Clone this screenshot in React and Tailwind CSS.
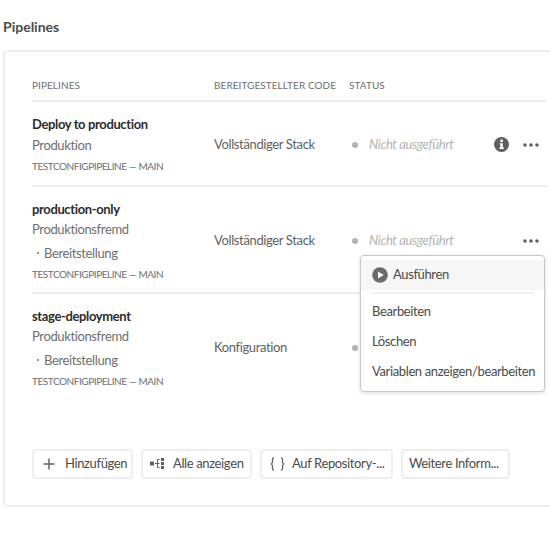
function Dots() {
  return (
    <svg width="16" height="4" viewBox="0 0 16 4" className="block">
      <circle cx="2" cy="2" r="1.8" fill="#5f5f5f" />
      <circle cx="8" cy="2" r="1.8" fill="#5f5f5f" />
      <circle cx="14" cy="2" r="1.8" fill="#5f5f5f" />
    </svg>
  );
}
function Status() {
  return (
    <div className="flex items-center ml-[3px]">
      <span className="w-[6px] h-[6px] rounded-full bg-[#b3b3b3]" />
      <span className="ml-[11px] text-[13px] italic text-[#b3b3b3]">Nicht ausgeführt</span>
    </div>
  );
}
function Row({ name, env, deploy, code, status, info, dots, border, h, tail, shift }) {
  return (
    <div className={`grid grid-cols-[182px_135px_1fr] items-center ${h} ${border ? "border-b-2 border-[#ededed]" : ""}`}>
      <div className="flex flex-col">
        <div className="text-[13px] leading-[20px] font-bold text-[#2c2c2c]">{name}</div>
        <div className={`text-[13px] leading-[20px] text-[#6e6e6e] ${deploy ? "" : "mt-[1px]"}`}>{env}</div>
        {deploy && (
          <div className="text-[13px] leading-[20px] mt-[4px] text-[#6e6e6e] pl-[5px] flex items-center">
            <span className="w-[2px] h-[2px] rounded-full bg-[#6e6e6e] mr-[5px]" />Bereitstellung
          </div>
        )}
        <div className="text-[10px] leading-[14px] mt-[4px] tracking-[-0.44px] text-[#6e6e6e]">TESTCONFIGPIPELINE — MAIN</div>
      </div>
      <div className={`text-[13px] text-[#5f5f5f] ${shift}`}>{code}</div>
      <div className={`flex items-center ${shift}`}>
        {status && <Status />}
        {tail && <span className="ml-[3px] w-[6px] h-[6px] rounded-full bg-[#b3b3b3]" />}
        <div className="ml-auto mr-[7px] flex items-center gap-[14px]">
          {info && (
            <svg width="15" height="15" viewBox="0 0 15 15">
              <circle cx="7.5" cy="7.5" r="7.5" fill="#5f5f5f" />
              <rect x="6.3" y="2.6" width="2.6" height="2.4" rx="0.6" fill="#fff" />
              <path d="M5.6 6.2h3.2v4.4h1v1.4H5.4v-1.4h1v-3h-.8z" fill="#fff" />
            </svg>
          )}
          {dots && <Dots />}
        </div>
      </div>
    </div>
  );
}
function Btn({ icon, children, w }) {
  return (
    <div className={`h-[30px] ${w} flex items-center whitespace-nowrap border-2 border-[#eeeeee] rounded-[4px] text-[13px] text-[#4b4b4b] bg-white`}>
      {icon}
      {children}
    </div>
  );
}
export default function App() {
  return (
    <div className="w-[550px] h-[547px] overflow-hidden bg-white relative tracking-[-0.37px]" style={{ fontFamily: '"Lato", "Noto Sans", sans-serif' }}>
      <h1 className="pl-[3px] pt-[17px] text-[14px] leading-[20px] font-bold tracking-normal text-[#4b4b4b]">Pipelines</h1>
      <div className="mt-[13px] ml-[3px] w-[560px] h-[457px] border-2 border-[#eeeeee] rounded-[4px] pl-[27px] pt-[26px] relative">
        <div className="w-[514px]">
          <div className="grid grid-cols-[182px_135px_1fr] h-[24px] border-b-2 border-[#ededed] text-[10px] tracking-[0.07px] leading-[14px] text-[#6e6e6e]">
            <div>PIPELINES</div>
            <div>BEREITGESTELLTER CODE</div>
            <div>STATUS</div>
          </div>
          <Row h="h-[85px]" shift="mt-[2px]" border name="Deploy to production" env="Produktion" code="Vollständiger Stack" status info dots />
          <Row h="h-[107px]" shift="mt-[2px]" border name="production-only" env="Produktionsfremd" deploy code="Vollständiger Stack" status dots />
          <Row h="h-[105px]" shift="mt-[2px]" name="stage-deployment" env="Produktionsfremd" deploy code="Konfiguration" tail />
        </div>
        <div className="mt-[50px] flex gap-[8px]">
          <Btn w="w-[101px]" icon={
            <svg width="12" height="12" viewBox="0 0 12 12" className="ml-[9px] mr-[10px]"><path d="M6 0.5v11M0.5 6h11" stroke="#5f5f5f" strokeWidth="1.4" /></svg>
          }>Hinzufügen</Btn>
          <Btn w="w-[111px]" icon={
            <svg width="16" height="12" viewBox="0 0 16 12" className="ml-[7px] mr-[7px]" fill="#5f5f5f">
              <rect x="0" y="3.5" width="4" height="4" />
              <path d="M5 5.5h3M7.5 1.5v8M7.5 1.5h2M7.5 5.5h2M7.5 9.5h2" stroke="#5f5f5f" fill="none" />
              <rect x="11" y="0" width="3" height="3" /><rect x="11" y="4" width="3" height="3" /><rect x="11" y="8" width="3" height="3" />
            </svg>
          }>Alle anzeigen</Btn>
          <Btn w="w-[133px]" icon={
            <svg width="15" height="14" viewBox="0 0 15 14" className="ml-[8px] mr-[7px]" fill="none" stroke="#5f5f5f" strokeWidth="1.2">
              <path d="M4 .8C2.4.8 2.4 1.8 2.4 3.2v2c0 1-.4 1.6-1.6 1.8 1.2.2 1.6.8 1.6 1.8v2c0 1.4 0 2.4 1.6 2.4" />
              <path d="M11 .8c1.6 0 1.6 1 1.6 2.4v2c0 1 .4 1.6 1.6 1.8-1.2.2-1.6.8-1.6 1.8v2c0 1.4 0 2.4-1.6 2.4" />
            </svg>
          }>Auf Repository-...</Btn>
          <Btn w="w-[109px] pl-[6px]">Weitere Inform...</Btn>
        </div>
        <div className="absolute left-[355px] top-[203px] w-[185px] h-[137px] bg-white rounded-[4px] border border-[#c8c8c8] shadow-[0_1px_4px_rgba(0,0,0,0.15)] text-[13px] text-[#4b4b4b] whitespace-nowrap">
          <div className="mt-[4px] h-[30px] bg-[#f6f6f6] flex items-center pl-[11px]">
            <svg width="16" height="16" viewBox="0 0 16 16" className="mr-[5px]">
              <circle cx="8" cy="8" r="7.8" fill="#6a6a6a" />
              <path d="M6 4.4L11.8 8 6 11.6z" fill="#fff" />
            </svg>
            Ausführen
          </div>
          <div className="mx-[10px] mt-[2px] h-[2px] bg-[#f0f0f0]" />
          <div className="pl-[11px] mt-[7px] leading-[20px]">Bearbeiten</div>
          <div className="pl-[11px] mt-[10px] leading-[20px]">Löschen</div>
          <div className="pl-[11px] mt-[10px] leading-[20px]">Variablen anzeigen/bearbeiten</div>
        </div>
      </div>
    </div>
  );
}
